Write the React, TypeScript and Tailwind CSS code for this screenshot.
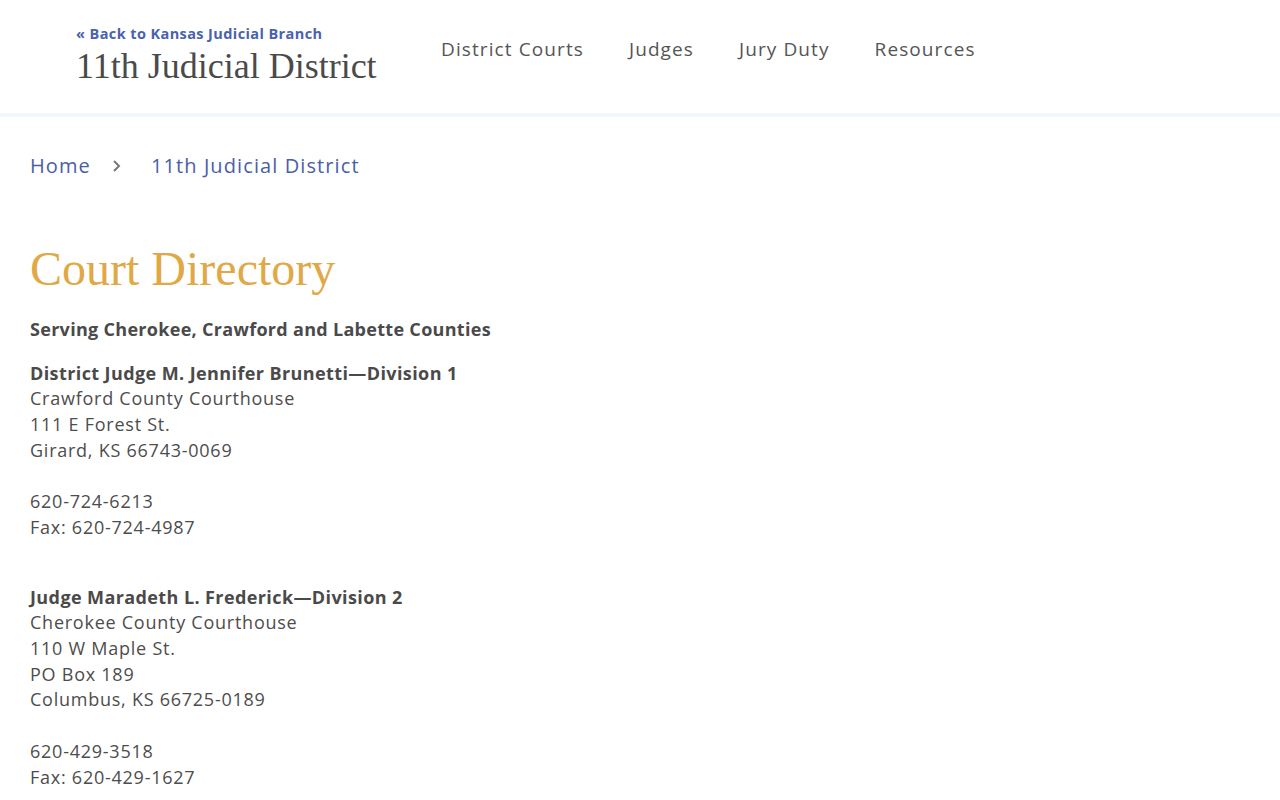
import React from 'react';

const sans = "font-['Open_Sans','Noto_Sans',sans-serif]";

const NavLink = ({ label }: { label: string }) => (
  <a href="#" className="text-[19px] text-[#555555] tracking-[1.1px]">
    {label}
  </a>
);

const Entry = ({ title, lines, phone, fax }: { title: string; lines: string[]; phone: string; fax: string }) => (
  <div className="mb-[44px]">
    <div className="font-bold text-[#4a4a4a] tracking-[0.4px]">{title}</div>
    {lines.map((l) => (
      <div key={l}>{l}</div>
    ))}
    <div className="h-[25.7px]" />
    <div>{phone}</div>
    <div>{fax}</div>
  </div>
);

export default function App() {
  return (
    <div className={`${sans} min-h-[800px] bg-white text-[#4d4d4d]`}>
      {/* Header */}
      <header className="h-[117px] flex items-start border-b-[4px] border-[#f3f7fd]">
        <div className="pl-[76px] pt-[25px] w-[441px]">
          <a href="#" className="block text-[14.5px] font-bold text-[#4a62ad] leading-[18px] tracking-[0.4px]">
            « Back to Kansas Judicial Branch
          </a>
          <div className="font-['Liberation_Serif',serif] text-[36px] leading-[40px] text-[#4a4a4a] mt-[3px]">
            11th Judicial District
          </div>
        </div>
        <nav className="flex gap-[45px] pt-[35px]">
          <NavLink label="District Courts" />
          <NavLink label="Judges" />
          <NavLink label="Jury Duty" />
          <NavLink label="Resources" />
        </nav>
      </header>

      {/* Breadcrumb */}
      <div className="px-[30px] pt-[34px] flex items-center text-[20px] text-[#4a5ea8] tracking-[1.1px]">
        <a href="#">Home</a>
        <svg className="ml-[20px] mr-[28px]" width="12" height="14" viewBox="0 0 12 14" fill="none" stroke="#777" strokeWidth="2">
          <polyline points="3 2 8 7 3 12" />
        </svg>
        <a href="#">11th Judicial District</a>
      </div>

      {/* Content */}
      <main className="px-[30px] pt-[60px] text-[18px] leading-[25.7px] tracking-[0.75px]">
        <h1 className="font-['Liberation_Serif',serif] text-[48px] leading-[56px] text-[#e1a846] mb-[20px] tracking-normal">
          Court Directory
        </h1>
        <p className="font-bold text-[#4a4a4a] mb-[18px] tracking-[0.3px]">Serving Cherokee, Crawford and Labette Counties</p>
        <Entry
          title="District Judge M. Jennifer Brunetti—Division 1"
          lines={['Crawford County Courthouse', '111 E Forest St.', 'Girard, KS 66743-0069']}
          phone="620-724-6213"
          fax="Fax: 620-724-4987"
        />
        <Entry
          title="Judge Maradeth L. Frederick—Division 2"
          lines={['Cherokee County Courthouse', '110 W Maple St.', 'PO Box 189', 'Columbus, KS 66725-0189']}
          phone="620-429-3518"
          fax="Fax: 620-429-1627"
        />
      </main>
    </div>
  );
}
